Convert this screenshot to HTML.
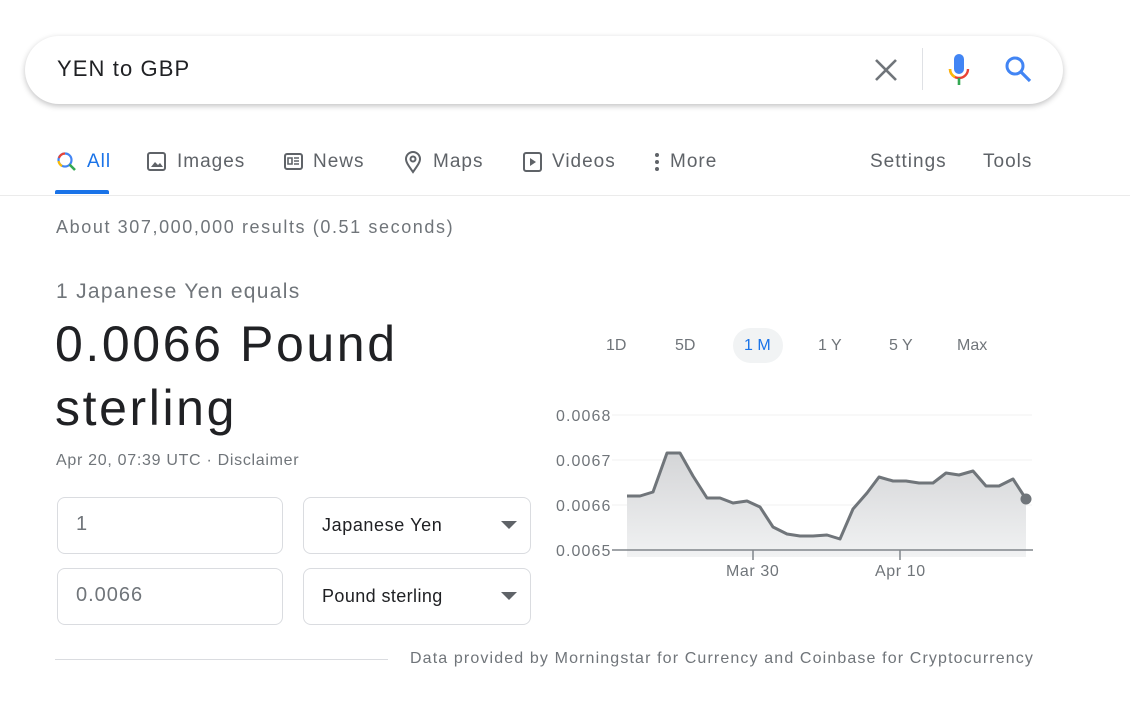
<!DOCTYPE html><html><head><style>
body{margin:0;width:1130px;height:701px;background:#fff;font-family:"Liberation Sans",Arial,sans-serif;position:relative;overflow:hidden;color:#202124}
.a{position:absolute;white-space:nowrap}
.box{position:absolute;border:1px solid #dadce0;border-radius:8px;box-sizing:border-box}
.tab{position:absolute;top:151px;font-size:19px;color:#5f6368;letter-spacing:1px}
</style></head><body>
<div class="a" style="left:25px;top:36px;width:1038px;height:68px;border-radius:34px;box-shadow:0 2px 6px rgba(32,33,36,.28);"></div>
<div class="a" style="left:57px;top:56px;font-size:22px;color:#202124;letter-spacing:1.1px">YEN to GBP</div>
<svg class="a" style="left:873px;top:57px" width="26" height="26"><path d="M3 3L23 23M23 3L3 23" stroke="#70757a" stroke-width="2.6"/></svg>
<div class="a" style="left:922px;top:48px;width:1px;height:42px;background:#dfe1e5"></div>
<svg class="a" style="left:946px;top:53px" width="28" height="34"><rect x="8" y="1" width="10" height="20" rx="5" fill="#4285f4"/><path d="M4 16a9 9 0 0 0 18 0" stroke="#ea4335" stroke-width="2.4" fill="none"/><path d="M13 25v7" stroke="#34a853" stroke-width="2.6"/><path d="M4 16a9 9 0 0 0 5 8" stroke="#fbbc05" stroke-width="2.4" fill="none"/></svg>
<svg class="a" style="left:1004px;top:55px" width="30" height="30"><circle cx="11" cy="11" r="8" stroke="#4285f4" stroke-width="3" fill="none"/><path d="M17 17L26 26" stroke="#4285f4" stroke-width="3.2"/></svg>

<svg class="a" style="left:56px;top:151px" width="22" height="22"><circle cx="9" cy="9" r="6.5" stroke="#4285f4" stroke-width="2.2" fill="none"/><path d="M3 7A6.5 6.5 0 0 1 9 2.5" stroke="#ea4335" stroke-width="2.2" fill="none"/><path d="M2.6 10A6.5 6.5 0 0 0 6 15" stroke="#fbbc05" stroke-width="2.2" fill="none"/><path d="M13.5 13.5L19 19" stroke="#34a853" stroke-width="2.6"/></svg>
<div class="tab" style="left:87px;color:#1a73e8">All</div>
<div class="a" style="left:55px;top:190px;width:54px;height:4px;background:#1a73e8;border-radius:2px 2px 0 0"></div>
<svg class="a" style="left:146px;top:151px" width="22" height="22"><rect x="2" y="2" width="17" height="17" rx="2" stroke="#5f6368" stroke-width="2" fill="none"/><path d="M5 16l4-5 3 3 2-2 3 4z" fill="#5f6368"/></svg>
<div class="tab" style="left:177px">Images</div>
<svg class="a" style="left:283px;top:152px" width="22" height="20"><rect x="2" y="2" width="17" height="15" rx="2" stroke="#5f6368" stroke-width="2" fill="none"/><path d="M5 6h4v6H5zM11 6h5M11 9h5M11 12h5" stroke="#5f6368" stroke-width="1.6" fill="none"/></svg>
<div class="tab" style="left:313px">News</div>
<svg class="a" style="left:403px;top:150px" width="20" height="24"><path d="M10 22C5 15 3 12 3 9a7 7 0 0 1 14 0c0 3-2 6-7 13z" stroke="#5f6368" stroke-width="2" fill="none"/><circle cx="10" cy="9" r="2.5" stroke="#5f6368" stroke-width="2" fill="none"/></svg>
<div class="tab" style="left:433px">Maps</div>
<svg class="a" style="left:522px;top:151px" width="22" height="22"><rect x="2" y="2" width="17" height="18" rx="2" stroke="#5f6368" stroke-width="2" fill="none"/><path d="M8 7l6 4-6 4z" fill="#5f6368"/></svg>
<div class="tab" style="left:552px">Videos</div>
<svg class="a" style="left:654px;top:152px" width="6" height="20"><circle cx="3" cy="3" r="2" fill="#5f6368"/><circle cx="3" cy="10" r="2" fill="#5f6368"/><circle cx="3" cy="17" r="2" fill="#5f6368"/></svg>
<div class="tab" style="left:670px">More</div>
<div class="tab" style="left:870px">Settings</div>
<div class="tab" style="left:983px">Tools</div>
<div class="a" style="left:0;top:195px;width:1130px;height:1px;background:#ebebeb"></div>

<div class="a" style="left:56px;top:217px;font-size:18px;color:#70757a;letter-spacing:1.6px">About 307,000,000 results (0.51 seconds)</div>
<div class="a" style="left:56px;top:280px;font-size:21px;color:#70757a;letter-spacing:1.3px">1 Japanese Yen equals</div>
<div class="a" style="left:55px;top:312px;font-size:50px;line-height:64px;color:#202124;letter-spacing:2.6px">0.0066 Pound<br>sterling</div>
<div class="a" style="left:56px;top:452px;font-size:16px;color:#70757a;letter-spacing:0.7px">Apr 20, 07:39 UTC · Disclaimer</div>

<div class="box" style="left:57px;top:497px;width:226px;height:57px"></div>
<div class="a" style="left:76px;top:513px;font-size:20px;color:#70757a">1</div>
<div class="box" style="left:303px;top:497px;width:228px;height:57px"></div>
<div class="a" style="left:322px;top:515px;font-size:18px;letter-spacing:0.6px">Japanese Yen</div>
<div class="box" style="left:57px;top:568px;width:226px;height:57px"></div>
<div class="a" style="left:76px;top:584px;font-size:20px;color:#70757a;letter-spacing:1px">0.0066</div>
<div class="box" style="left:303px;top:568px;width:228px;height:57px"></div>
<div class="a" style="left:322px;top:586px;font-size:18px;letter-spacing:0.4px">Pound sterling</div>
<svg class="a" style="left:501px;top:521px" width="16" height="8"><path d="M0 0h16L8 8z" fill="#5f6368"/></svg>
<svg class="a" style="left:501px;top:592px" width="16" height="8"><path d="M0 0h16L8 8z" fill="#5f6368"/></svg>

<div class="a" style="left:733px;top:328px;width:50px;height:35px;border-radius:18px;background:#f1f3f4"></div>
<div class="a" style="left:606px;top:337px;font-size:16px;color:#70757a">1D</div>
<div class="a" style="left:675px;top:337px;font-size:16px;color:#70757a">5D</div>
<div class="a" style="left:744px;top:337px;font-size:16px;color:#1a73e8">1 M</div>
<div class="a" style="left:818px;top:337px;font-size:16px;color:#70757a">1 Y</div>
<div class="a" style="left:889px;top:337px;font-size:16px;color:#70757a">5 Y</div>
<div class="a" style="left:957px;top:337px;font-size:16px;color:#70757a">Max</div>

<svg class="a" style="left:0;top:0" width="1130" height="701">
<defs><linearGradient id="g" x1="0" y1="0" x2="0" y2="1"><stop offset="0" stop-color="#d4d5d7"/><stop offset="1" stop-color="#f1f2f3"/></linearGradient></defs>
<path d="M612 415H1032M612 460H1032M612 505H1032" stroke="#f1f1f1"/>
<polygon fill="url(#g)" points="627,557 627,496 640,496 653,492 667,453 680,453 693,476 707,498 720,498 733,503 747,501 760,507 773,527 787,534 800,536 813,536 827,535 840,539 853,509 867,493 879,477 893,481 906,481 919,483 933,483 946,473 959,475 973,471 986,486 999,486 1013,479 1026,499 1026,557"/>
<polyline fill="none" stroke="#70757a" stroke-width="3" stroke-linejoin="round" points="627,496 640,496 653,492 667,453 680,453 693,476 707,498 720,498 733,503 747,501 760,507 773,527 787,534 800,536 813,536 827,535 840,539 853,509 867,493 879,477 893,481 906,481 919,483 933,483 946,473 959,475 973,471 986,486 999,486 1013,479 1026,499"/>
<circle cx="1026" cy="499" r="5.5" fill="#70757a"/>
<path d="M612 550H1033M753 550v10M900 550v10" stroke="#80868b" stroke-width="1.5"/>
<g font-family="Liberation Sans,Arial" font-size="16" fill="#70757a" letter-spacing="1.1"><text x="556" y="421">0.0068</text><text x="556" y="466">0.0067</text><text x="556" y="511">0.0066</text><text x="556" y="556">0.0065</text><text x="726" y="576" letter-spacing="0.6">Mar 30</text><text x="875" y="576" letter-spacing="0.6">Apr 10</text></g>
</svg>

<div class="a" style="left:55px;top:659px;width:333px;height:1px;background:#dadce0"></div>
<div class="a" style="left:410px;top:650px;font-size:16px;color:#70757a;letter-spacing:1.13px">Data provided by Morningstar for Currency and Coinbase for Cryptocurrency</div>
</body></html>
